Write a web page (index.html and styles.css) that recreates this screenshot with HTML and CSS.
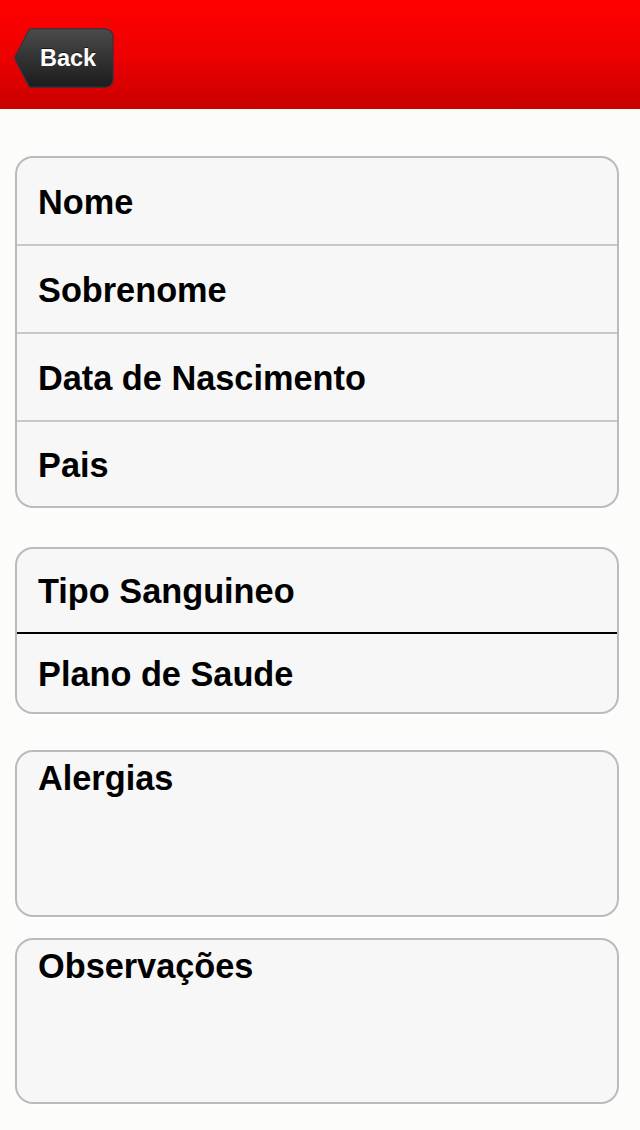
FILE: index.html
```html
<!DOCTYPE html>
<html lang="pt">
<head>
<meta charset="utf-8">
<title>Ficha</title>
<link rel="stylesheet" href="styles.css">
</head>
<body>
<header class="topbar">
  <button class="back-btn" type="button">
    <svg class="back-shape" viewBox="0 0 100 60" width="100" height="60" aria-hidden="true">
      <defs>
        <linearGradient id="bg" x1="0" y1="0" x2="0" y2="1">
          <stop offset="0" stop-color="#4b4b4b"/>
          <stop offset="0.5" stop-color="#333333"/>
          <stop offset="1" stop-color="#1c1c1c"/>
        </linearGradient>
      </defs>
      <path d="M17,0.8 H91 A8,8 0 0 1 99,8.8 V51.2 A8,8 0 0 1 91,59.2 H17 Q15.6,59.2 14.9,58 L1.2,31.2 Q0.6,30 1.2,28.8 L14.9,2 Q15.6,0.8 17,0.8 Z" fill="url(#bg)" stroke="#2c3444" stroke-width="1.2"/>
    </svg>
    <span class="back-label">Back</span>
  </button>
</header>

<main class="content">
  <section class="group group-info">
    <div class="row">Nome</div>
    <div class="row">Sobrenome</div>
    <div class="row">Data de Nascimento</div>
    <div class="row row-last">Pais</div>
  </section>

  <section class="group group-health">
    <div class="row row-a">Tipo Sanguineo</div>
    <div class="row row-b">Plano de Saude</div>
  </section>

  <section class="group area area-1">
    <div class="area-label">Alergias</div>
  </section>

  <section class="group area area-2">
    <div class="area-label">Observações</div>
  </section>
</main>
</body>
</html>
```

FILE: styles.css
```css
* { box-sizing: border-box; }

html, body {
  margin: 0;
  padding: 0;
}

body {
  width: 640px;
  min-height: 1130px;
  background: #fcfcfb;
  font-family: "Liberation Sans", Arial, Helvetica, sans-serif;
  color: #000;
}

.topbar {
  height: 109px;
  background: linear-gradient(to bottom, #ff0000 0%, #ee0000 50%, #c90000 100%);
  display: flex;
  align-items: flex-start;
  padding: 28px 0 0 14px;
}

.back-btn {
  position: relative;
  width: 100px;
  height: 60px;
  padding: 0 0 0 26px;
  margin: 0;
  border: 0;
  background: transparent;
  display: flex;
  align-items: center;
  cursor: pointer;
}

.back-shape {
  position: absolute;
  left: 0;
  top: 0;
}

.back-label {
  position: relative;
  font-family: "Liberation Sans", Arial, sans-serif;
  font-weight: bold;
  font-size: 23.5px;
  color: #fff;
  text-shadow: 0 -1px 0 rgba(0,0,0,0.6);
  line-height: 1;
  padding-top: 1px;
}

.content {
  display: flex;
  flex-direction: column;
  padding: 47px 21px 0 15px;
}

.group {
  background: #f7f7f7;
  border: 2px solid #bbbbbf;
  border-radius: 18px;
  overflow: hidden;
  box-shadow: 0 1px 0 #ffffff;
}

.row {
  height: 88px;
  display: flex;
  align-items: center;
  padding: 2px 0 0 21px;
  font-weight: bold;
  font-size: 34.3px;
  border-bottom: 2px solid #c8c8cc;
}

.row-last {
  height: 84px;
  border-bottom: 0;
}

.group-health {
  margin-top: 39px;
}

.row-a {
  height: 85px;
  border-bottom: 2px solid #000;
}

.row-b {
  height: 78px;
  border-bottom: 0;
}

.area {
  height: 167px;
  padding: 8px 0 0 21px;
}

.area-1 {
  margin-top: 36px;
}

.area-2 {
  margin-top: 21px;
  height: 166px;
}

.area-label {
  font-weight: bold;
  font-size: 34.3px;
  line-height: 36px;
}
```
